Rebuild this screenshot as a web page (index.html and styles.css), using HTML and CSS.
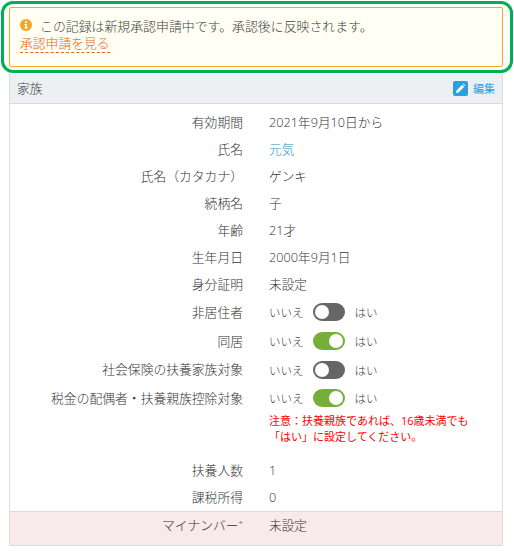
FILE: index.html
```html
<!DOCTYPE html>
<html lang="ja">
<head>
<meta charset="utf-8">
<title>家族</title>
<link rel="stylesheet" href="styles.css">
</head>
<body>
<div class="highlight"></div>
<div class="alert">
  <p class="alert-line">
    <svg class="info" viewBox="0 0 12 12" width="12" height="12"><circle cx="6" cy="6" r="6" fill="#f5a623"/><rect x="5" y="2.2" width="2" height="1.8" fill="#fff"/><path d="M4.4 5h2.6v3.6h.8v1H4.4v-1h.9V6h-.9z" fill="#fff"/></svg>
    <span>この記録は新規承認申請中です。承認後に反映されます。</span>
  </p>
  <a class="alert-link">承認申請を見る</a>
</div>
<section class="panel">
  <header class="panel-head">
    <span class="panel-title">家族</span>
    <a class="edit">
      <svg viewBox="0 0 15 15" width="15" height="15"><rect width="15" height="15" rx="2" fill="#2b9fe0"/><path d="M3 12l.6-2.6 5.6-5.6 2 2-5.6 5.6z" fill="#fff"/><path d="M9.9 3.1l.7-.5 1.8 1.8-.5.7z" fill="#fff"/></svg>
      <span>編集</span>
    </a>
  </header>
  <div class="rows">
    <div class="row"><div class="label">有効期間</div><div class="value">2021年9月10日から</div></div>
    <div class="row"><div class="label">氏名</div><div class="value link">元気</div></div>
    <div class="row"><div class="label">氏名（カタカナ）</div><div class="value">ゲンキ</div></div>
    <div class="row"><div class="label">続柄名</div><div class="value">子</div></div>
    <div class="row"><div class="label">年齢</div><div class="value">21才</div></div>
    <div class="row"><div class="label">生年月日</div><div class="value">2000年9月1日</div></div>
    <div class="row"><div class="label">身分証明</div><div class="value">未設定</div></div>
    <div class="row toggle-row"><div class="label">非居住者</div><div class="value switch-line"><span class="opt">いいえ</span><span class="switch"></span><span class="opt">はい</span></div></div>
    <div class="row toggle-row"><div class="label">同居</div><div class="value switch-line"><span class="opt">いいえ</span><span class="switch on"></span><span class="opt">はい</span></div></div>
    <div class="row toggle-row"><div class="label">社会保険の扶養家族対象</div><div class="value switch-line"><span class="opt">いいえ</span><span class="switch"></span><span class="opt">はい</span></div></div>
    <div class="row toggle-row tall"><div class="label">税金の配偶者・扶養親族控除対象</div><div class="value"><div class="switch-line"><span class="opt">いいえ</span><span class="switch on"></span><span class="opt">はい</span></div><p class="note">注意：扶養親族であれば、16歳未満でも<br>「はい」に設定してください。</p></div></div>
    <div class="row"><div class="label">扶養人数</div><div class="value">1</div></div>
    <div class="row"><div class="label">課税所得</div><div class="value">0</div></div>
  </div>
  <div class="row pink"><div class="label">マイナンバー<sup class="star">*</sup></div><div class="value">未設定</div></div>
</section>
</body>
</html>
```
FILE: styles.css
```css
* { box-sizing: border-box; }
html, body { margin: 0; padding: 0; }
body {
  position: relative;
  width: 514px;
  height: 551px;
  overflow: hidden;
  background: #fff;
  padding: 7px 11px 0 9px;
  font-family: "Open Sans", "Noto Sans CJK JP", sans-serif;
  font-weight: 300;
  font-size: 12.7px;
  color: #333;
}
.highlight {
  position: absolute;
  left: 1px;
  top: 1px;
  width: 512px;
  height: 72px;
  border: 3px solid #00b050;
  border-radius: 12px;
  pointer-events: none;
}
.alert {
  height: 60px;
  background: #fffff3;
  border: 1px solid #f5a623;
  border-radius: 2px;
  padding: 8px 10px 0;
}
.alert-line { margin: 0; display: flex; align-items: center; gap: 8px; height: 18px; font-size: 12.9px; color: #444; }
.alert-link {
  display: inline-block;
  margin-top: 1px;
  height: 18px;
  line-height: 17px;
  font-size: 12.8px;
  color: #e0661c;
  border-bottom: 1px dashed #e0661c;
}
.panel { margin-top: 7px; border: 1px solid #ddd; border-top: 0; }
.panel-head {
  height: 30px;
  background: #ecf0f3;
  border-bottom: 1px solid #d8d8d8;
  display: flex;
  align-items: center;
  justify-content: space-between;
  padding: 0 7px 3px;
  color: #444;
}
.panel-title { font-size: 12.8px; }
.edit { display: flex; align-items: center; gap: 5px; color: #2b9fe0; font-size: 11px; font-weight: 400; padding-top: 2px; }
.rows { padding-top: 5px; }
.row { display: flex; height: 27px; align-items: center; }
.label { width: 233px; text-align: right; flex: none; padding-bottom: 2px; font-size: 12.8px; }
.value { margin-left: 26px; padding-bottom: 2px; }
.link { color: #2a8fc0; }
.toggle-row { height: 28.7px; }
.toggle-row.tall { height: 73px; align-items: flex-start; padding-top: 4px; }
.switch-line { display: flex; align-items: center; height: 20px; padding-bottom: 0; }
.opt { font-size: 11.5px; color: #444; }
.switch {
  position: relative;
  width: 32px;
  height: 18px;
  margin: 0 10px 0 9px;
  border-radius: 9px;
  background: #666;
}
.switch::after {
  content: "";
  position: absolute;
  left: 2px;
  top: 2px;
  width: 14px;
  height: 14px;
  border-radius: 50%;
  background: #fff;
}
.switch.on { background: #76ae3a; }
.switch.on::after { left: 16px; }
.note { margin: 5px 0 0; color: #f00; font-size: 11px; font-weight: 400; line-height: 16px; }
.pink { background: #f8e9ea; border-top: 1px solid #ddd; height: 34px; align-items: flex-start; padding-top: 3px; }
.star { font-size: 8px; line-height: 0; vertical-align: 3px; }
```
